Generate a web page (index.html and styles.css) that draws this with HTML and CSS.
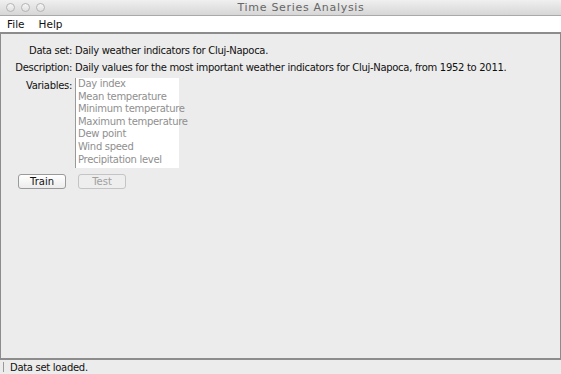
FILE: index.html
```html
<!DOCTYPE html>
<html lang="en">
<head>
  <meta charset="UTF-8" />
  <title>Time Series Analysis</title>
  <link rel="stylesheet" href="styles.css">
</head>
<body>
  <div class="window">
    <div class="titlebar">
      <div class="lights">
        <span class="light"></span>
        <span class="light"></span>
        <span class="light"></span>
      </div>
      <div class="title">Time Series Analysis</div>
    </div>

    <div class="menubar">
      <span class="menu">File</span>
      <span class="menu">Help</span>
    </div>

    <div class="content">
      <div class="form">
        <div class="label">Data set:</div>
        <div class="value">Daily weather indicators for Cluj-Napoca.</div>

        <div class="label">Description:</div>
        <div class="value">Daily values for the most important weather indicators for Cluj-Napoca, from 1952 to 2011.</div>

        <div class="label label-top">Variables:</div>
        <ul class="var-list">
          <li>Day index</li>
          <li>Mean temperature</li>
          <li>Minimum temperature</li>
          <li>Maximum temperature</li>
          <li>Dew point</li>
          <li>Wind speed</li>
          <li>Precipitation level</li>
        </ul>
      </div>

      <div class="actions">
        <button class="btn">Train</button>
        <button class="btn" disabled>Test</button>
      </div>
    </div>

    <div class="statusbar">
      <span class="grip"></span>
      <span>Data set loaded.</span>
    </div>
  </div>
</body>
</html>
```

FILE: styles.css
```css
body {
  margin: 0;
  font-family: 'DejaVu Sans', sans-serif;
  font-size: 10px;
  letter-spacing: -0.3px;
  color: #111;
  background: #ececec;
}
.window {
  display: flex;
  flex-direction: column;
  height: 374px;
  width: 561px;
  overflow: hidden;
}
.titlebar {
  height: 15px;
  display: flex;
  align-items: center;
  background: linear-gradient(#f0f0f0, #d6d6d6);
  border-bottom: 1px solid #a9a9a9;
}
.lights {
  display: flex;
  gap: 6px;
  padding-left: 6px;
}
.light {
  width: 7px;
  height: 7px;
  border-radius: 50%;
  border: 1px solid #b4b4b4;
  background: linear-gradient(#f6f6f6, #e0e0e0);
}
.title {
  flex: 1;
  text-align: center;
  padding-right: 4px;
  color: #666;
  font-size: 11px;
  letter-spacing: 0.7px;
}
.menubar {
  height: 16px;
  display: flex;
  align-items: center;
  gap: 14px;
  padding-left: 7px;
  background: #fff;
  border-bottom: 2px solid #8c8c8c;
  font-size: 10.5px;
  letter-spacing: 0;
}
.content {
  flex: 1;
  border-left: 1px solid #8c8c8c;
  border-right: 1px solid #8c8c8c;
  background: #ececec;
  padding: 10px 0 0 11px;
}
.form {
  display: grid;
  grid-template-columns: 60px auto;
  column-gap: 3px;
  row-gap: 4px;
}
.label {
  text-align: right;
  line-height: 13px;
}
.label-top {
  margin-top: 1px;
}
.value {
  line-height: 13px;
}
.var-list {
  list-style: none;
  margin: 0;
  padding: 0 2px 2px;
  width: 99px;
  white-space: nowrap;
  background: #fff;
  border-left: 1px solid #999;
  color: #8f8f8f;
  line-height: 12.6px;
}
.actions {
  display: flex;
  gap: 12px;
  margin-top: 6px;
  padding-left: 6px;
}
.btn {
  width: 48px;
  height: 15px;
  padding: 0;
  font-family: inherit;
  font-size: 10px;
  letter-spacing: 0;
  color: #111;
  background: linear-gradient(#fff, #ececec);
  border: 1px solid #9a9a9a;
  border-radius: 3px;
}
.btn:disabled {
  color: #a0a0a0;
  border-color: #c4c4c4;
  background: #eeeeee;
}
.statusbar {
  height: 14px;
  display: flex;
  align-items: center;
  gap: 6px;
  padding-left: 3px;
  border-top: 2px solid #8c8c8c;
  background: #ececec;
  font-size: 10px;
}
.grip {
  width: 1px;
  height: 10px;
  background: #999;
}
```
